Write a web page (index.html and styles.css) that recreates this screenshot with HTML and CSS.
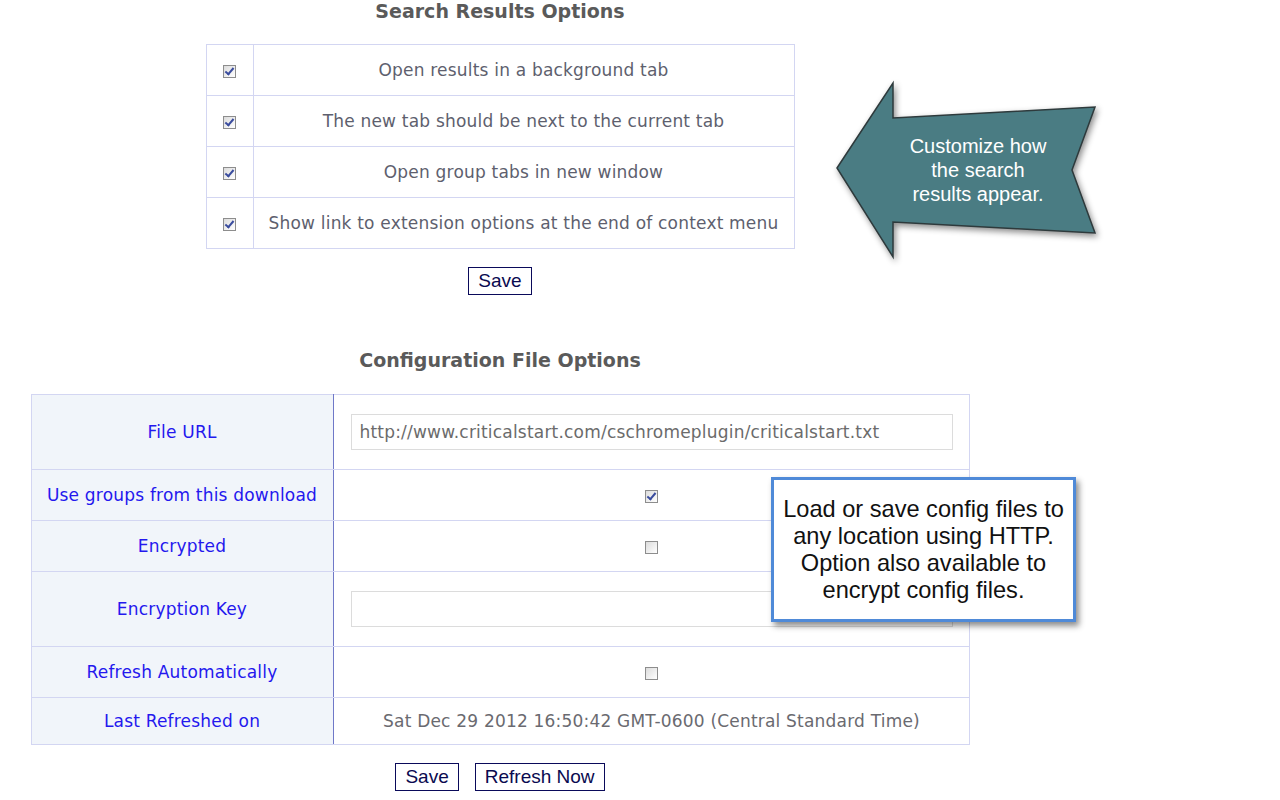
FILE: index.html
```
<!DOCTYPE html>
<html>
<head>
<meta charset="utf-8">
<link rel="stylesheet" href="styles.css">
</head>
<body>
<div class="page">
  <h2 class="title first">Search Results Options</h2>
  <table class="opts">
    <tr><td class="cbcol"><span class="cb on"></span></td><td class="txt">Open results in a background tab</td></tr>
    <tr><td class="cbcol"><span class="cb on"></span></td><td class="txt">The new tab should be next to the current tab</td></tr>
    <tr><td class="cbcol"><span class="cb on"></span></td><td class="txt">Open group tabs in new window</td></tr>
    <tr><td class="cbcol"><span class="cb on"></span></td><td class="txt">Show link to extension options at the end of context menu</td></tr>
  </table>
  <div class="btns first-btns"><button class="btn">Save</button></div>

  <h2 class="title second">Configuration File Options</h2>
  <table class="config">
    <tr class="tall"><td class="lbl">File URL</td><td class="val"><div class="field">http://www.criticalstart.com/cschromeplugin/criticalstart.txt</div></td></tr>
    <tr><td class="lbl">Use groups from this download</td><td class="val"><span class="cb on"></span></td></tr>
    <tr><td class="lbl">Encrypted</td><td class="val"><span class="cb"></span></td></tr>
    <tr class="tall"><td class="lbl">Encryption Key</td><td class="val"><div class="field"></div></td></tr>
    <tr><td class="lbl">Refresh Automatically</td><td class="val"><span class="cb"></span></td></tr>
    <tr class="last"><td class="lbl">Last Refreshed on</td><td class="val date">Sat Dec 29 2012 16:50:42 GMT-0600 (Central Standard Time)</td></tr>
  </table>
  <div class="btns second-btns"><button class="btn">Save</button><button class="btn">Refresh Now</button></div>
</div>

<div class="arrow">
  <svg class="arrow-shape" width="290" height="200" viewBox="0 0 290 200">
    <polygon points="7,93 63,8 63,43 265,32 242,95 265,158 63,147 63,182" fill="#4a7c83" stroke="#2e3a3c" stroke-width="1.5"/>
  </svg>
  <div class="arrow-text">Customize how<br>the search<br>results appear.</div>
</div>

<div class="callout">Load or save config files to<br>any location using HTTP.<br>Option also available to<br>encrypt config files.</div>
</body>
</html>
```
FILE: styles.css
```
html, body { margin: 0; padding: 0; background: #fff; }
body { font-family: "DejaVu Sans", Verdana, sans-serif; position: relative; width: 1280px; height: 800px; overflow: hidden; }
.page { width: 1000px; text-align: center; }
.title { margin: 0; font-size: 19px; line-height: 22px; font-weight: bold; color: #5a5a5a; }
.title.first { padding-top: 0; }
.opts { margin: 22px auto 0; border-collapse: collapse; width: 589px; }
.opts td { border: 1px solid #d3d6f2; height: 50px; padding: 0; font-size: 17px; letter-spacing: 0.2px; color: #5e5f6e; }
.opts .cbcol { width: 46px; }
.opts .txt { text-align: center; }
.btns { display: flex; justify-content: center; gap: 16px; }
.first-btns { margin-top: 18px; }
.btn { font-family: "Liberation Sans", Arial, sans-serif; font-size: 19px; line-height: 26px; height: 28px; padding: 0 9px; border: 1px solid #0a0a5a; background: #fff; color: #0a0a50; border-radius: 0; margin: 0; }
.title.second { margin-top: 54px; }
.config { margin: 23px auto 0; border-collapse: collapse; width: 939px; }
.config td { border: 1px solid #d3d6f2; height: 50px; padding: 0; font-size: 17px; letter-spacing: 0.2px; }
.config tr.tall td { height: 74px; }
.config tr.last td { height: 46px; }
.config .lbl { width: 301px; background: #f1f5fa; color: #2418ee; border-right: 1px solid #6f78c8; }
.config .val { text-align: center; padding: 0 16px 0 17px; }
.field { height: 34px; border: 1px solid #dcdcdc; text-align: left; padding-left: 8px; line-height: 34px; color: #6b6b6b; font-size: 17px; }
.date { color: #6a6a70; letter-spacing: 0.35px; }
.second-btns { margin-top: 18px; }
.cb { display: inline-block; width: 11px; height: 11px; border: 1px solid #8d8d8d; background: linear-gradient(135deg, #dcdcdc, #ffffff); vertical-align: middle; position: relative; }
.cb.on::after { content: ""; position: absolute; left: 3px; top: 0px; width: 3px; height: 7px; border: solid #3a4c9e; border-width: 0 2px 2px 0; transform: rotate(40deg); }
.arrow { position: absolute; left: 830px; top: 75px; width: 290px; height: 200px; }
.arrow-shape { position: absolute; left: 0; top: 0; filter: drop-shadow(2px 3px 3px rgba(0,0,0,0.45)); }
.arrow-text { position: absolute; left: 58px; top: 59px; width: 180px; text-align: center; font-family: "Liberation Sans", Arial, sans-serif; font-size: 20px; line-height: 24px; color: #fff; }
.callout { position: absolute; left: 771px; top: 477px; width: 299px; height: 139px; border: 3px solid #4f8ad8; background: #fff; box-shadow: 3px 4px 6px rgba(0,0,0,0.45); display: flex; align-items: center; justify-content: center; text-align: center; font-family: "Liberation Sans", Arial, sans-serif; font-size: 23.6px; line-height: 27px; color: #111; }
```
